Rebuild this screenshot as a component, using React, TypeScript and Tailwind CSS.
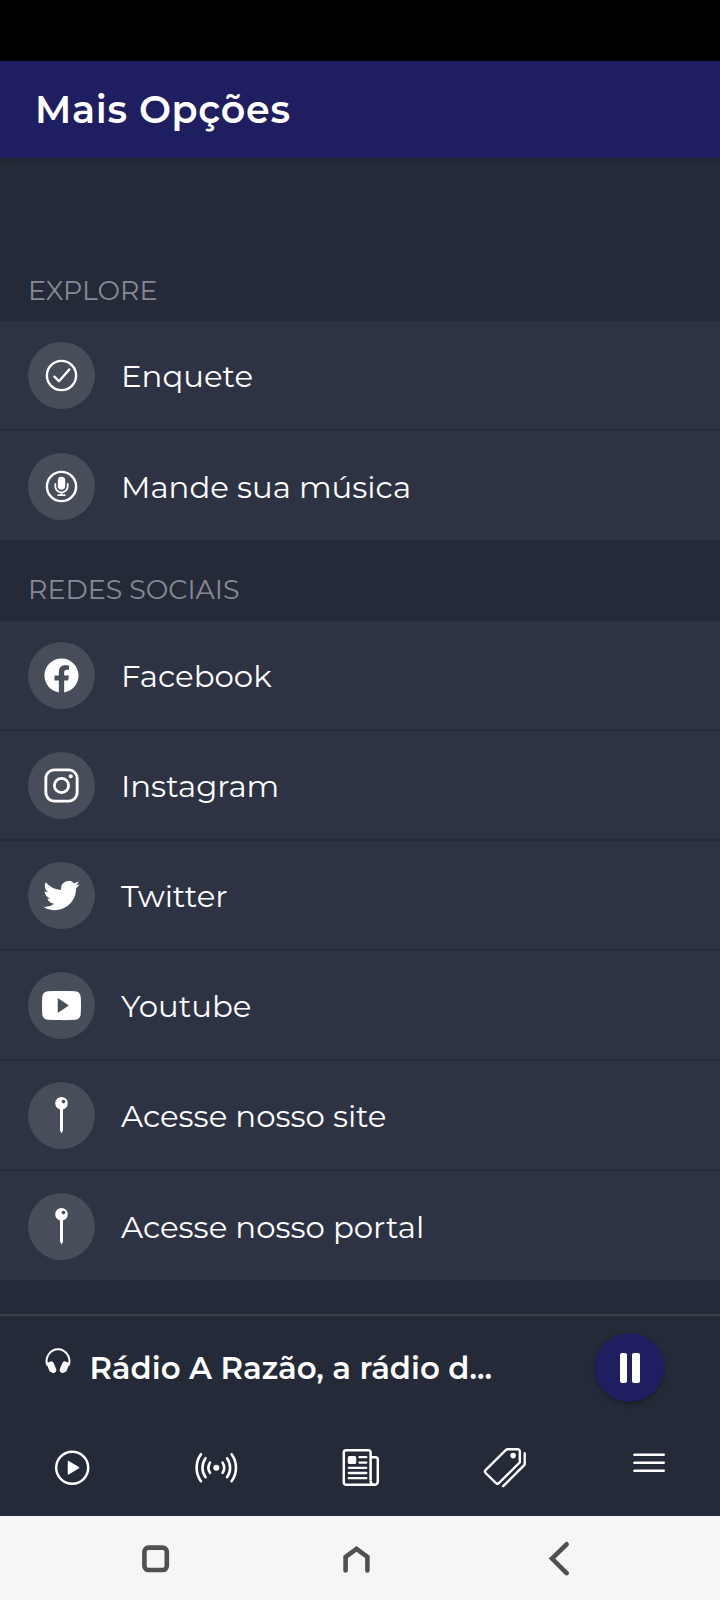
import React from 'react';
import { IoLogoFacebook, IoLogoInstagram, IoLogoTwitter, IoLogoYoutube } from 'react-icons/io5';

const CheckCircleIcon = () => (
  <svg width="39" height="39" viewBox="0 0 39 39" fill="none" stroke="currentColor">
    <circle cx="19.5" cy="19.5" r="14.6" strokeWidth="2.4" />
    <path d="M12.4 20.6 17 25.3 27.3 13.4" strokeWidth="2.3" strokeLinecap="round" strokeLinejoin="round" />
  </svg>
);

const MicCircleIcon = () => (
  <svg width="39" height="39" viewBox="0 0 39 39" fill="none" stroke="currentColor">
    <circle cx="19.5" cy="19.5" r="14.6" strokeWidth="2.4" />
    <rect x="15.8" y="9.8" width="7.4" height="13" rx="3.7" fill="currentColor" stroke="none" />
    <path d="M13.3 16.8v2.5a6.2 6.1 0 0 0 12.4 0v-2.5M19.5 25.4v2.6M16.2 28.1h6.6" strokeWidth="1.8" strokeLinecap="round" />
  </svg>
);

const PinIcon = () => (
  <svg width="39" height="39" viewBox="0 0 39 39" fill="currentColor">
    <path fillRule="evenodd" d="M19.5.9a6.3 6.3 0 1 1 0 12.6 6.3 6.3 0 0 1 0-12.6zM21.5 3.8a1.8 1.8 0 1 0 0 3.6 1.8 1.8 0 0 0 0-3.6z" />
    <path d="M18 13h3v21.4l-1.5 3-1.5-3z" />
  </svg>
);

const HeadphonesIcon = () => (
  <svg width="28" height="28" viewBox="0 0 28 28" fill="none" stroke="currentColor">
    <path d="M3.4 18.5A11.4 11.8 0 1 1 24.6 18.5" strokeWidth="2" />
    <path d="M7 17.4 9.3 22.9M21 17.4 18.7 22.9" strokeWidth="6" strokeLinecap="round" />
    <path d="M4 16.8 6.8 23.4M24 16.8 21.2 23.4" strokeWidth="2.8" strokeLinecap="round" />
  </svg>
);

const PlayCircleIcon = () => (
  <svg width="44" height="44" viewBox="0 0 44 44" fill="none" stroke="currentColor">
    <circle cx="22.2" cy="21.7" r="16" strokeWidth="2.5" />
    <path d="M18.4 15.5 28.6 21.7 18.4 27.9z" fill="currentColor" strokeWidth="1.4" strokeLinejoin="round" />
  </svg>
);

const RadioIcon = () => (
  <svg width="46" height="44" viewBox="0 0 46 44" fill="none" stroke="currentColor" strokeWidth="2.6" strokeLinecap="round">
    <circle cx="23.3" cy="21.7" r="3" fill="currentColor" stroke="none" />
    <path d="M17 16.6a9.5 9.5 0 0 0 0 10.2M12.6 12.2a16 16 0 0 0 0 19M8 8.2a23 23 0 0 0 0 27" />
    <path d="M29.6 16.6a9.5 9.5 0 0 1 0 10.2M34 12.2a16 16 0 0 1 0 19M38.6 8.2a23 23 0 0 1 0 27" />
  </svg>
);

const PaperIcon = () => (
  <svg width="44" height="44" viewBox="0 0 44 44" fill="none" stroke="currentColor" strokeWidth="2.5">
    <path d="M32.6 34.5V6.6a2.4 2.4 0 0 0-2.4-2.4H8.2a2.4 2.4 0 0 0-2.4 2.4v29.8a2.4 2.4 0 0 0 2.4 2.4h28.2a3.4 3.4 0 0 0 3.4-3.4V13.6a2.4 2.4 0 0 0-2.4-2.4h-4.8" />
    <path d="M32.6 34.5c0 2.8 1.2 4.3 3.6 4.3" />
    <rect x="9.8" y="9.9" width="8.4" height="8.2" rx="1.5" fill="currentColor" stroke="none" />
    <path d="M21.5 11.2h6.8M21.5 16.6h6.8M10.8 21.8h17.5M10.8 27h17.5M10.8 32.2h17.5" strokeWidth="2.3" strokeLinecap="round" />
  </svg>
);

const TagsIcon = () => (
  <svg width="44" height="44" viewBox="0 0 44 44" fill="none" stroke="currentColor" strokeWidth="2.4" strokeLinejoin="round" strokeLinecap="round">
    <path d="M24.2 3.7 3.6 24.2a2 2 0 0 0 0 2.8L14 37.2a2 2 0 0 0 2.8 0L37.8 16.4V5.2a2 2 0 0 0-2-2H25.6a2.4 2.4 0 0 0-1.4.5z" />
    <path d="M42.7 7.2v11.4L21.2 40.2" />
    <circle cx="31.1" cy="9.6" r="2.8" fill="currentColor" stroke="none" />
  </svg>
);

const MenuIcon = () => (
  <svg width="44" height="44" viewBox="0 0 44 44" fill="none" stroke="currentColor" strokeWidth="2.6" strokeLinecap="round">
    <path d="M8.4 13.8h29.3M8.4 21.8h29.3M8.4 29.7h29.3" />
  </svg>
);

const SECTIONS = [
  {
    title: 'EXPLORE',
    items: [
      { label: 'Enquete', icon: <CheckCircleIcon /> },
      { label: 'Mande sua música', icon: <MicCircleIcon /> },
    ],
  },
  {
    title: 'REDES SOCIAIS',
    items: [
      { label: 'Facebook', icon: <IoLogoFacebook size={39} /> },
      { label: 'Instagram', icon: <IoLogoInstagram size={39} /> },
      { label: 'Twitter', icon: <IoLogoTwitter size={39} /> },
      { label: 'Youtube', icon: <IoLogoYoutube size={39} /> },
      { label: 'Acesse nosso site', icon: <PinIcon /> },
      { label: 'Acesse nosso portal', icon: <PinIcon /> },
    ],
  },
];

const App: React.FC = () => {
  return (
    <div className="flex h-[1600px] w-[720px] flex-col overflow-hidden bg-[#242a37] font-['Montserrat','Inter',sans-serif] text-white">
      <div className="h-[61px] shrink-0 bg-black" />

      <header className="flex h-[97px] shrink-0 items-center bg-[#1e1e60] pl-[35px] shadow-[0_1px_5px_rgba(0,0,0,0.2)]">
        <h1 className="pt-px text-[38px] leading-none font-semibold tracking-[0.7px]">Mais Opções</h1>
      </header>

      <main className="flex h-[1156px] shrink-0 flex-col pt-[82px]">
        {SECTIONS.map((section) => (
          <section key={section.title} className="group">
            <h2 className="flex h-[81px] items-end pb-[17px] pl-7 text-[26.9px] leading-[27px] font-normal text-[#868a96] group-last:pb-[18px]">
              {section.title}
            </h2>
            <ul className="bg-[#2d3343]">
              {section.items.map((item) => (
                <li
                  key={item.label}
                  className="flex h-[110px] items-center gap-[26px] border-b-2 border-[#262b39] pt-px pl-7 last:h-[109px] last:border-b-0"
                >
                  <span className="flex size-[67px] items-center justify-center rounded-full bg-[#484d5a]">{item.icon}</span>
                  <span className="pt-px text-[30.8px] leading-10">{item.label}</span>
                </li>
              ))}
            </ul>
          </section>
        ))}
      </main>

      <footer className="flex h-[202px] shrink-0 flex-col border-t-2 border-[#3c404d]">
        <div className="flex h-[102px] items-center pr-14 pl-11">
          <span className="pb-3">
            <HeadphonesIcon />
          </span>
          <span className="ml-[17.5px] flex-1 truncate pt-[2px] text-[30.8px] leading-10 font-semibold">Rádio A Razão, a rádio d...</span>
          <button className="mt-px flex size-[69px] items-center justify-center gap-[5px] rounded-full bg-[#1e1e60] shadow-[0_2px_4px_rgba(0,0,0,0.3)]">
            <span className="h-[30px] w-[7.5px] rounded-[2px] bg-white" />
            <span className="h-[30px] w-[7.5px] rounded-[2px] bg-white" />
          </button>
        </div>
        <nav className="grid h-[98px] grid-cols-5 justify-items-center pt-[28px]">
          <PlayCircleIcon />
          <RadioIcon />
          <PaperIcon />
          <TagsIcon />
          <span className="-mt-[5px]">
            <MenuIcon />
          </span>
        </nav>
      </footer>

      {/* system navigation */}
      <div className="flex h-[84px] shrink-0 items-center bg-[#f6f6f6] pl-[138px] text-[#505050]">
        <svg width="36" height="36" viewBox="0 0 36 36" fill="none" stroke="currentColor" strokeWidth="4.6">
          <rect x="6.4" y="7.6" width="22.4" height="22.4" rx="4" />
        </svg>
        <svg className="ml-[165px]" width="36" height="36" viewBox="0 0 36 36" fill="none" stroke="currentColor" strokeWidth="4.6" strokeLinecap="round">
          <path d="M6.6 30.5V16.8L17.5 8.8 28.4 16.8V30.5" />
        </svg>
        <svg className="ml-[165px]" width="36" height="36" viewBox="0 0 36 36" fill="none" stroke="currentColor" strokeWidth="4.6" strokeLinecap="round">
          <path d="M26.6 4.3 12 18.6 26.6 33.2" />
        </svg>
      </div>
    </div>
  );
};

export default App;
